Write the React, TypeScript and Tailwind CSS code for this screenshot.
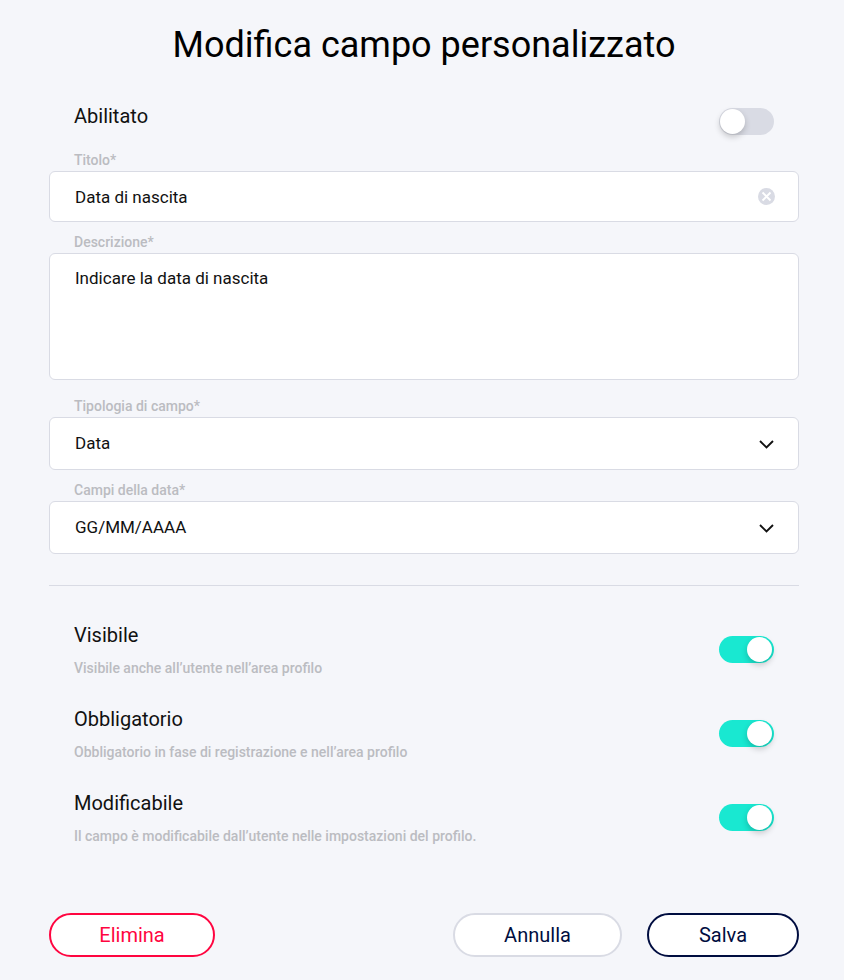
import { useState } from "react";
import type { ReactNode } from "react";

const Toggle = ({ id, checked, onChange }: { id: string; checked: boolean; onChange: (value: boolean) => void }) => (
  <span className="relative mt-1 block h-[27px] w-[55px] shrink-0">
    <input
      id={id}
      type="checkbox"
      role="switch"
      checked={checked}
      onChange={(e) => onChange(e.target.checked)}
      className="peer block h-full w-full cursor-pointer appearance-none rounded-full bg-[#d9dbe4] checked:bg-[#19e8d1]"
    />
    <span className="pointer-events-none absolute top-px left-px size-[25px] rounded-full bg-white shadow-[0_3px_6px_rgba(0,0,0,0.2)] peer-checked:left-[28px]" />
  </span>
);

const FieldLabel = ({ htmlFor, children }: { htmlFor: string; children: ReactNode }) => (
  <label htmlFor={htmlFor} className="block pl-[25px] text-[14px] leading-[21px] font-medium text-[#bbbcc1]">
    {children}
  </label>
);

const SelectField = ({ id, label, options }: { id: string; label: string; options: string[] }) => (
  <div>
    <FieldLabel htmlFor={id}>{label}</FieldLabel>
    <div className="relative">
      <select
        id={id}
        className="block h-[53px] w-full appearance-none rounded-md border border-[#d9dbe4] bg-white pr-14 pl-[25px] text-[17px] text-[#111]"
      >
        {options.map((option) => (
          <option key={option}>{option}</option>
        ))}
      </select>
      <svg
        viewBox="0 0 16 10"
        className="pointer-events-none absolute top-[22px] right-6 h-[10px] w-4"
        fill="none"
        stroke="#111"
        strokeWidth="1.9"
      >
        <path d="M1 2 L7.5 8.5 L14 2" />
      </svg>
    </div>
  </div>
);

const settings = [
  { id: "visible", title: "Visibile", text: "Visibile anche all’utente nell’area profilo" },
  { id: "required", title: "Obbligatorio", text: "Obbligatorio in fase di registrazione e nell’area profilo" },
  { id: "editable", title: "Modificabile", text: "Il campo è modificabile dall’utente nelle impostazioni del profilo." },
];

const App = () => {
  const [title, setTitle] = useState("Data di nascita");
  const [description, setDescription] = useState("Indicare la data di nascita");
  const [flags, setFlags] = useState<Record<string, boolean>>({
    enabled: false,
    visible: true,
    required: true,
    editable: true,
  });

  const setFlag = (id: string, value: boolean) => setFlags({ ...flags, [id]: value });

  return (
    <main className="min-h-screen bg-[#f5f6fa] pt-5 pr-[45px] pb-6 pl-[49px] font-['Roboto',sans-serif] text-[#111]">
      <h1 className="text-center text-[36px] leading-[50px] text-black">Modifica campo personalizzato</h1>

      <form onSubmit={(e) => e.preventDefault()}>
        <div className="mt-[34px] flex items-start justify-between px-[25px]">
          <label htmlFor="enabled" className="text-[20px] leading-6">
            Abilitato
          </label>
          <Toggle id="enabled" checked={flags.enabled} onChange={(value) => setFlag("enabled", value)} />
        </div>

        <div className="mt-[15px]">
          <FieldLabel htmlFor="title">Titolo*</FieldLabel>
          <div className="relative">
            <input
              id="title"
              type="text"
              value={title}
              onChange={(e) => setTitle(e.target.value)}
              className="block h-[51px] w-full rounded-md border border-[#d9dbe4] bg-white pr-14 pl-[25px] text-[17px]"
            />
            <button
              type="button"
              aria-label="Cancella"
              onClick={() => setTitle("")}
              className="absolute top-[17px] right-6 size-[17px]"
            >
              <svg viewBox="0 0 17 17" className="size-full">
                <circle cx="8.5" cy="8.5" r="8.5" fill="#d9dbe4" />
                <path d="M4.5 4.5 L12.5 12.5 M12.5 4.5 L4.5 12.5" stroke="#fff" strokeWidth="1.9" />
              </svg>
            </button>
          </div>
        </div>

        <div className="mt-[10px]">
          <FieldLabel htmlFor="description">Descrizione*</FieldLabel>
          <textarea
            id="description"
            value={description}
            onChange={(e) => setDescription(e.target.value)}
            className="block h-[127px] w-full resize-none rounded-md border border-[#d9dbe4] bg-white px-[25px] py-3 text-[17px] leading-6"
          />
        </div>

        <div className="mt-4 flex flex-col gap-[10px]">
          <SelectField id="type" label="Tipologia di campo*" options={["Data", "Testo", "Numero"]} />
          <SelectField id="format" label="Campi della data*" options={["GG/MM/AAAA", "MM/AAAA", "AAAA"]} />
        </div>

        <hr className="mt-[31px] border-[#d9dbe4]" />

        <div className="mt-9 flex flex-col gap-6">
          {settings.map(({ id, title, text }) => (
            <div key={id} className="flex h-[60px] items-start justify-between px-[25px] pt-px">
              <div>
                <label htmlFor={id} className="block text-[20px] leading-6">
                  {title}
                </label>
                <p className="mt-[11px] text-[14px] leading-[21px] font-medium text-[#bbbcc1]">{text}</p>
              </div>
              <div className="pt-[9px]">
                <Toggle id={id} checked={flags[id]} onChange={(value) => setFlag(id, value)} />
              </div>
            </div>
          ))}
        </div>

        <div className="mt-[63px] flex items-center gap-[25px] text-[20px]">
          <button type="button" className="mr-auto h-11 w-[166px] rounded-full border-2 border-[#ff0540] bg-white text-[#ff0540]">
            Elimina
          </button>
          <button type="button" className="h-11 w-[169px] rounded-full border-2 border-[#d9dbe4] bg-white text-[#000d40]">
            Annulla
          </button>
          <button type="submit" className="h-11 w-[152px] rounded-full border-2 border-[#000d40] bg-white text-[#000d40]">
            Salva
          </button>
        </div>
      </form>
    </main>
  );
};

export default App;
